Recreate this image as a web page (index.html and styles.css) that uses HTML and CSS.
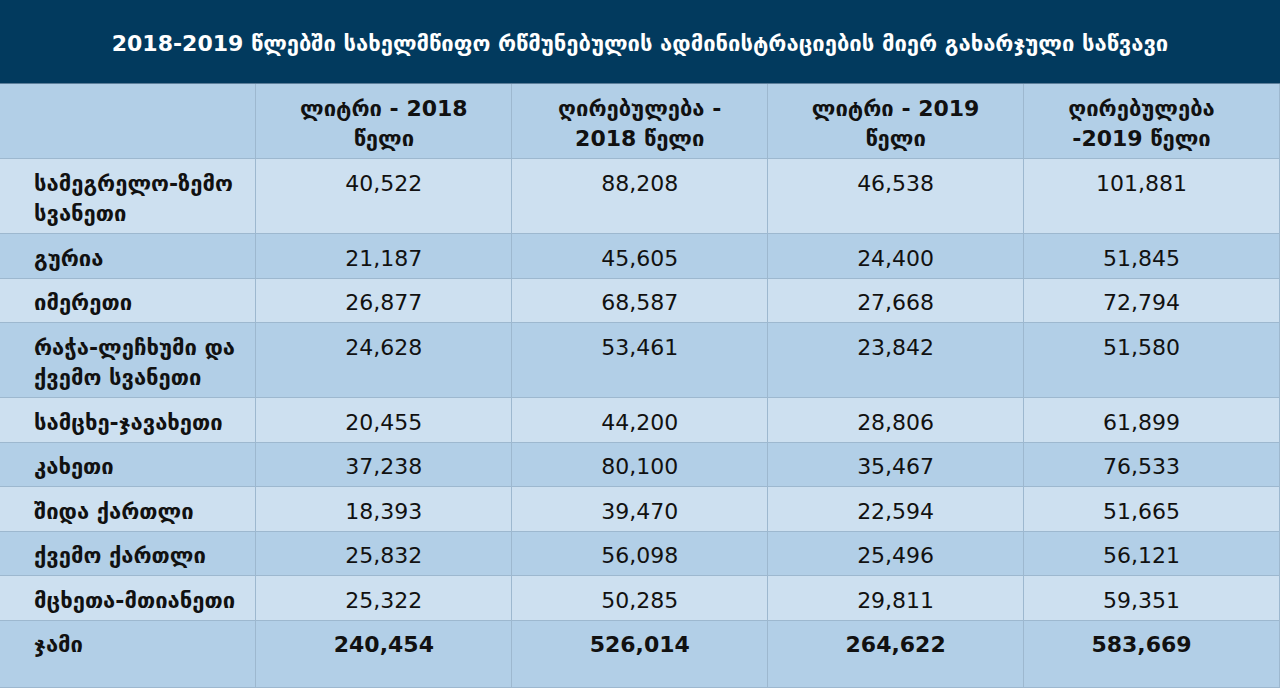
FILE: index.html
```html
<!DOCTYPE html>
<html lang="ka">
<head>
<meta charset="utf-8">
<title>საწვავი</title>
<link rel="stylesheet" href="styles.css">
</head>
<body>
<div class="title">2018-2019 წლებში სახელმწიფო რწმუნებულის ადმინისტრაციების მიერ გახარჯული საწვავი</div>
<table class="data">
  <colgroup><col><col><col><col><col></colgroup>
  <thead>
    <tr class="dark">
      <th></th>
      <th>ლიტრი - 2018<br>წელი</th>
      <th>ღირებულება -<br>2018 წელი</th>
      <th>ლიტრი - 2019<br>წელი</th>
      <th>ღირებულება<br>-2019 წელი</th>
    </tr>
  </thead>
  <tbody>
    <tr class="light"><td class="name">სამეგრელო-ზემო<br>სვანეთი</td><td>40,522</td><td>88,208</td><td>46,538</td><td>101,881</td></tr>
    <tr class="dark"><td class="name">გურია</td><td>21,187</td><td>45,605</td><td>24,400</td><td>51,845</td></tr>
    <tr class="light"><td class="name">იმერეთი</td><td>26,877</td><td>68,587</td><td>27,668</td><td>72,794</td></tr>
    <tr class="dark"><td class="name">რაჭა-ლეჩხუმი და<br>ქვემო სვანეთი</td><td>24,628</td><td>53,461</td><td>23,842</td><td>51,580</td></tr>
    <tr class="light"><td class="name">სამცხე-ჯავახეთი</td><td>20,455</td><td>44,200</td><td>28,806</td><td>61,899</td></tr>
    <tr class="dark"><td class="name">კახეთი</td><td>37,238</td><td>80,100</td><td>35,467</td><td>76,533</td></tr>
    <tr class="light"><td class="name">შიდა ქართლი</td><td>18,393</td><td>39,470</td><td>22,594</td><td>51,665</td></tr>
    <tr class="dark"><td class="name">ქვემო ქართლი</td><td>25,832</td><td>56,098</td><td>25,496</td><td>56,121</td></tr>
    <tr class="light"><td class="name">მცხეთა-მთიანეთი</td><td>25,322</td><td>50,285</td><td>29,811</td><td>59,351</td></tr>
    <tr class="dark total"><td class="name">ჯამი</td><td>240,454</td><td>526,014</td><td>264,622</td><td>583,669</td></tr>
  </tbody>
</table>
</body>
</html>
```
FILE: styles.css
```css
html, body {
  margin: 0;
  padding: 0;
  background: #b2cfe7;
}
body {
  width: 1280px;
  height: 688px;
  overflow: hidden;
  font-family: "DejaVu Sans", sans-serif;
  color: #111;
}
.title {
  height: 84px;
  box-sizing: border-box;
  padding-top: 4px;
  background: #023a5e;
  color: #fff;
  font-weight: bold;
  font-size: 22px;
  display: flex;
  align-items: center;
  justify-content: center;
  border-bottom: 1px solid #5d7f9b;
}
.data {
  width: 1280px;
  border-collapse: collapse;
  table-layout: fixed;
}
.data col {
  width: 20%;
}
.data th,
.data td {
  border: 1px solid #9db8cf;
  border-top: 0;
  padding: 9.5px 8px 3.5px;
  line-height: 30.5px;
  text-align: center;
  vertical-align: top;
  font-size: 22px;
}
.data th:first-child,
.data td:first-child {
  border-left: 0;
}
.data th:last-child,
.data td:last-child {
  padding-right: 28px;
}
.data th {
  font-weight: bold;
}
.data td.name {
  text-align: left;
  padding-left: 34px;
  font-weight: bold;
}
.dark {
  background: #b2cfe7;
}
.light {
  background: #cde0f0;
}
.total td {
  font-weight: bold;
  padding-bottom: 26px;
}
```
